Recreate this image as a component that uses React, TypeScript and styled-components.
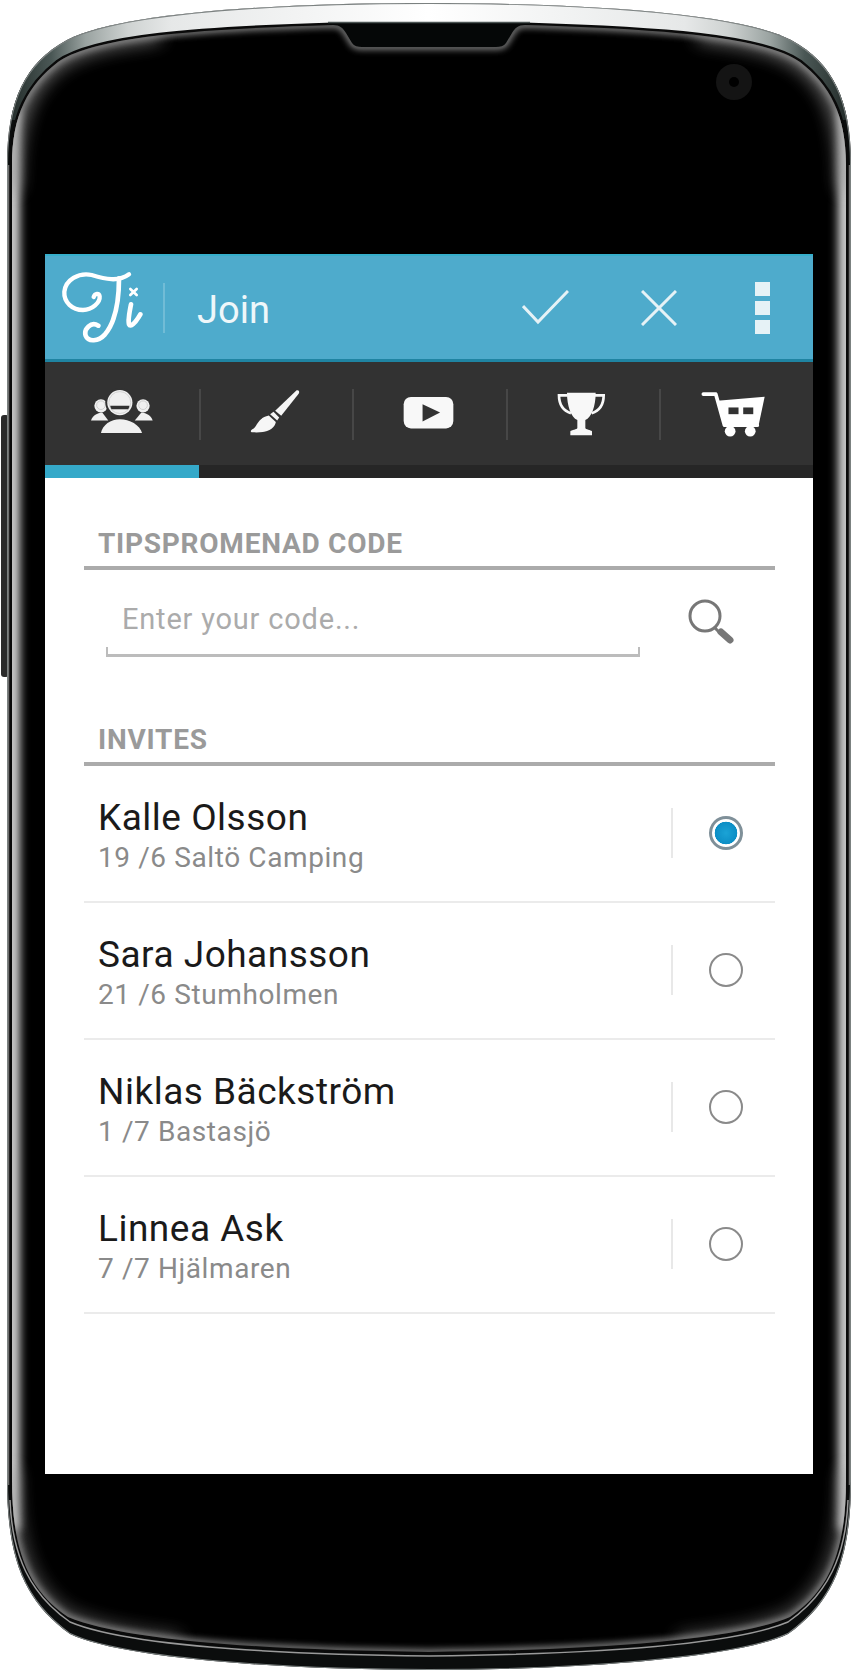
import React from "react";
import styled, { createGlobalStyle } from "styled-components";

const GlobalStyle = createGlobalStyle`
  html, body { margin: 0; padding: 0; background: #fff; }
  * { box-sizing: border-box; }
`;

const Phone = styled.div`
  position: relative;
  width: 856px;
  height: 1672px;
  padding: 254px 43px 198px 45px;
  overflow: hidden;
  font-family: Roboto, "Liberation Sans", sans-serif;
`;
const Shell = styled.svg`
  position: absolute;
  left: 0;
  top: 0;
`;
const Screen = styled.main`
  position: relative;
  height: 1220px;
  background: #fff;
  display: flex;
  flex-direction: column;
`;
const AppBar = styled.header`
  height: 108px;
  flex: none;
  display: flex;
  align-items: center;
  background: #4eabcc;
  border-top: 2px solid #35aecb;
  border-bottom: 3px solid #1f84a2;
  color: #eef7fa;
`;
const Logo = styled.svg`
  margin: 4px 0 0 10px;
  flex: none;
`;
const BarDivider = styled.span`
  width: 2px;
  height: 50px;
  margin-left: 8px;
  background: #71bcd6;
`;
const Title = styled.h1`
  flex: 1;
  margin: 4px 0 0 32px;
  font-size: 38px;
  font-weight: 400;
  line-height: 44px;
  color: #eef7fa;
`;
const BarIcon = styled.svg<{ $mr: number }>`
  flex: none;
  margin-right: ${(p) => p.$mr}px;
`;
const Overflow = styled.div`
  display: flex;
  flex-direction: column;
  gap: 5px;
  margin: 0 43px 0 0;
`;
const Dot = styled.span`
  width: 15px;
  height: 14px;
  background: #e6f2f6;
`;
const Tabs = styled.nav`
  height: 103px;
  flex: none;
  display: flex;
  background: #323232;
`;
const Tab = styled.div<{ $lift?: number; $left?: number }>`
  position: relative;
  width: 20%;
  flex: none;
  display: flex;
  align-items: center;
  justify-content: center;
  padding-bottom: ${(p) => p.$lift ?? 0}px;
  padding-right: ${(p) => p.$left ?? 0}px;
  &:not(:last-child)::after {
    content: "";
    position: absolute;
    right: -2px;
    top: 27px;
    width: 2px;
    height: 51px;
    background: #474747;
  }
`;
const Track = styled.div`
  height: 13px;
  flex: none;
  background: #262626;
`;
const Indicator = styled.div`
  width: 20%;
  height: 100%;
  background: #35a9c9;
`;
const Content = styled.div`
  flex: 1;
  padding: 49px 38px 0 39px;
`;
const SectionTitle = styled.h2`
  margin: 0;
  padding: 0 0 5px 14px;
  border-bottom: 4px solid #ababab;
  font-size: 28px;
  font-weight: 700;
  letter-spacing: 0.75px;
  line-height: 34px;
  color: #9a9a9a;
`;
const CodeRow = styled.div`
  display: flex;
  align-items: flex-start;
  height: 153px;
`;
const Field = styled.div`
  position: relative;
  width: 534px;
  height: 87px;
  margin-left: 22px;
  padding: 32px 0 0 16px;
  border-bottom: 3px solid #bcbcbc;
  font-size: 29px;
  letter-spacing: 0.8px;
  line-height: 34px;
  color: #ababab;
  &::before,
  &::after {
    content: "";
    position: absolute;
    bottom: 0;
    width: 2px;
    height: 7px;
    background: #bcbcbc;
  }
  &::before { left: 0; }
  &::after { right: 0; }
`;
const SearchIcon = styled.svg`
  margin: 27px 0 0 45px;
  flex: none;
`;
const List = styled.ul`
  margin: 0;
  padding: 0;
  list-style: none;
`;
const Row = styled.li`
  height: 137px;
  display: flex;
  align-items: center;
  padding: 0 32px 1px 14px;
  border-bottom: 2px solid #ebebeb;
`;
const RowText = styled.div`
  flex: 1;
  align-self: flex-start;
  padding-top: 30px;
`;
const Name = styled.div`
  font-size: 37px;
  letter-spacing: 0.5px;
  line-height: 44px;
  font-weight: 400;
  color: #1a1a1a;
`;
const Sub = styled.div`
  margin-top: 1px;
  font-size: 28px;
  letter-spacing: 0.6px;
  line-height: 34px;
  color: #8a8a8a;
`;
const RowDivider = styled.span`
  width: 2px;
  height: 50px;
  background: #e8e8e8;
  margin-right: 36px;
`;
const Radio = styled.span<{ $on?: boolean }>`
  width: 34px;
  height: 34px;
  flex: none;
  border-radius: 50%;
  border: ${(p) => (p.$on ? "3px solid #7f9099" : "2px solid #8a8a8a")};
  background: ${(p) =>
    p.$on
      ? "radial-gradient(circle at 50% 50%, #1ba3d6 0, #0d8fc6 10.5px, #0d8fc6 11px, #fff 11.6px)"
      : "#fff"};
`;

const outer =
  "M429 3 C300 3 125 10 67 40 C25 63 7 100 7 165 L7 1480 C7 1560 25 1602 70 1634 C120 1658 280 1670 429 1670 C578 1670 738 1658 788 1634 C833 1602 851 1560 851 1480 L851 165 C851 100 833 63 791 40 C733 10 558 3 429 3 Z";
const glass =
  "M12 165 C12 115 28 85 58 62 C95 36 200 29 333 25 C340 25 343 28 346 33 L352 43 C354 46 358 47 362 47 L496 47 C500 47 504 46 506 43 L512 33 C515 28 518 25 525 25 C658 29 763 36 800 62 C830 85 846 115 846 165 L846 1480 C846 1550 830 1590 790 1617 C735 1640 600 1650 429 1652 C258 1650 123 1640 68 1617 C28 1590 12 1550 12 1480 Z";
const notch =
  "M326 23 H532 L512 33 L506 43 C504 46 500 47 496 47 L362 47 C358 47 354 46 352 43 L346 33 Z";

const PhoneShell = () => (
  <Shell width="856" height="1672" viewBox="0 0 856 1672">
    <defs>
      <linearGradient id="metal" x1="0" x2="1" y1="0" y2="0">
        <stop offset="0" stopColor="#1c2422" />
        <stop offset="0.06" stopColor="#4a5755" />
        <stop offset="0.1" stopColor="#9aa3a1" />
        <stop offset="0.15" stopColor="#cfd3d2" />
        <stop offset="0.2" stopColor="#e6e8e8" />
        <stop offset="0.5" stopColor="#ffffff" />
        <stop offset="0.8" stopColor="#e6e8e8" />
        <stop offset="0.85" stopColor="#cfd3d2" />
        <stop offset="0.9" stopColor="#9aa3a1" />
        <stop offset="0.94" stopColor="#4a5755" />
        <stop offset="1" stopColor="#1c2422" />
      </linearGradient>
      <clipPath id="outerClip"><path d={outer} /></clipPath>
      <clipPath id="glassClip"><path d={glass} /></clipPath>
      <filter id="blurS" x="-5%" y="-5%" width="110%" height="110%"><feGaussianBlur stdDeviation="3" /></filter>
      <filter id="blurM" filterUnits="userSpaceOnUse" x="0" y="0" width="856" height="1672"><feGaussianBlur stdDeviation="5" /></filter>
      <filter id="blurL" filterUnits="userSpaceOnUse" x="0" y="0" width="856" height="1672"><feGaussianBlur stdDeviation="9" /></filter>
    </defs>
    <rect x="1" y="415" width="8" height="262" rx="3" fill="#2a2a2a" />
    <path d={outer} fill="#0b0d0d" />
    <g clipPath="url(#outerClip)">
      <rect x="0" y="0" width="856" height="120" fill="url(#metal)" />
      <path d={outer} fill="none" stroke="#7b8180" strokeWidth="2" />
      <rect x="8" y="165" width="1.5" height="1320" fill="#6e6e6e" />
      <rect x="848.5" y="165" width="1.5" height="1320" fill="#6e6e6e" />
    </g>
    <path d={glass} fill="#000" stroke="#0a0a0a" strokeWidth="5" />
    <path d={notch} fill="#050707" />
    <path d="M328 22.5 H530" stroke="#4c5554" strokeWidth="1.5" fill="none" />
    <g clipPath="url(#glassClip)">
      <path d={glass} fill="none" stroke="#8f8f8f" strokeWidth="5" filter="url(#blurS)" />
      <path d="M12 110 V1530" fill="none" stroke="#c8c8c8" strokeWidth="16" filter="url(#blurM)" />
      <path d="M846 110 V1530" fill="none" stroke="#c8c8c8" strokeWidth="16" filter="url(#blurM)" />
      <g opacity="0.85">
        <path d="M12 190 C12 115 28 85 58 62 C80 47 110 40 160 34" fill="none" stroke="#999" strokeWidth="12" filter="url(#blurL)" />
        <path d="M846 190 C846 115 830 85 800 62 C778 47 748 40 698 34" fill="none" stroke="#999" strokeWidth="12" filter="url(#blurL)" />
        <path d="M12 1470 C12 1550 28 1590 68 1617 C100 1630 130 1636 180 1641" fill="none" stroke="#999" strokeWidth="8" filter="url(#blurL)" />
        <path d="M846 1470 C846 1550 830 1590 790 1617 C758 1630 728 1636 678 1641" fill="none" stroke="#999" strokeWidth="8" filter="url(#blurL)" />
      </g>
    </g>
    <path d="M10 1500 C12 1556 30 1594 70 1622 C125 1645 260 1654 429 1656 C598 1654 733 1645 788 1622 C828 1594 846 1556 848 1500" fill="none" stroke="#9a9a9a" strokeWidth="1.5" />
    <circle cx="734" cy="82" r="18" fill="#141414" />
    <circle cx="734" cy="82" r="5" fill="#000" />
  </Shell>
);

const GroupIcon = () => (
  <svg width="63" height="47" viewBox="15 15 190 140" fill="#f0f0f0">
    <circle cx="48" cy="68" r="20" />
    <circle cx="48" cy="66" r="13" fill="none" stroke="#cfcfcf" strokeWidth="3" />
    <circle cx="175" cy="68" r="20" />
    <circle cx="175" cy="66" r="13" fill="none" stroke="#cfcfcf" strokeWidth="3" />
    <path d="M18 112 C24 96 36 90 52 88 L70 112 Z" />
    <path d="M204 112 C198 96 186 90 170 88 L150 112 Z" />
    <circle cx="105" cy="58" r="44" fill="#323232" />
    <circle cx="105" cy="58" r="38" />
    <circle cx="105" cy="58" r="33" fill="none" stroke="#d4d4d4" strokeWidth="3" />
    <path d="M76 68 H134 C133 73 132 76 130 78 H80 C78 76 77 73 76 68 Z" fill="#323232" />
    <path d="M48 150 C52 125 78 108 105 108 C134 108 166 125 172 150 Z" stroke="#323232" strokeWidth="3" paintOrder="stroke" />
  </svg>
);
const BrushIcon = () => (
  <svg width="52" height="47" viewBox="490 15 155 140" fill="#f6f6f6">
    <path d="M632 22 C638 20 642 26 638 32 L586 98 L568 83 Z" />
    <path d="M563 86 L580 103 L574 112 L553 93 Z" />
    <path d="M549 97 L570 116 C566 136 546 150 500 147 C494 146 494 142 500 138 C516 130 514 104 549 97 Z" />
  </svg>
);
const PlayIcon = () => (
  <svg width="53" height="37" viewBox="20 30 160 110">
    <rect x="25" y="38" width="150" height="95" rx="22" fill="#f8f8f8" />
    <path d="M82 60 L135 85 L82 112 Z" fill="#323232" />
  </svg>
);
const TrophyIcon = () => (
  <svg width="50" height="45" viewBox="485 25 150 135" fill="#f8f8f8">
    <path d="M518 30 H604 C604 70 592 104 573 112 V136 C573 140 590 142 593 146 V158 H528 V146 C531 142 549 140 549 136 V112 C530 104 518 70 518 30 Z" />
    <path d="M520 38 H494 C494 64 506 84 530 92 M602 38 H628 C628 64 616 84 592 92" fill="none" stroke="#f8f8f8" strokeWidth="8" />
  </svg>
);
const CartIcon = () => (
  <svg width="67" height="47" viewBox="915 20 200 140">
    <path d="M925 32 H962 L988 125 H1086" fill="none" stroke="#fff" strokeWidth="11" strokeLinecap="round" strokeLinejoin="round" />
    <path d="M967 52 L1108 40 L1090 125 H988 Z" fill="#fff" />
    <rect x="1000" y="72" width="30" height="20" fill="#323232" />
    <rect x="1044" y="72" width="30" height="20" fill="#323232" />
    <circle cx="1005" cy="143" r="16" fill="#fff" />
    <circle cx="1065" cy="143" r="16" fill="#fff" />
  </svg>
);

const invites = [
  { name: "Kalle Olsson", sub: "19 /6 Saltö Camping", on: true },
  { name: "Sara Johansson", sub: "21 /6 Stumholmen" },
  { name: "Niklas Bäckström", sub: "1 /7 Bastasjö" },
  { name: "Linnea Ask", sub: "7 /7 Hjälmaren" },
];

export default function App() {
  return (
    <Phone>
      <GlobalStyle />
      <PhoneShell />
      <Screen>
        <AppBar>
          <Logo width="100" height="90" viewBox="0 0 300 270" fill="none" stroke="#fff" strokeWidth="13" strokeLinecap="round">
            <path d="M222 28 C190 52 150 42 110 30 C70 22 32 45 28 80 C26 112 52 135 84 135 C112 135 136 112 134 94 C132 84 120 84 116 96" />
            <path d="M192 40 C192 100 182 170 150 208 C130 230 100 232 92 212 C86 192 108 168 130 182" strokeWidth="14" />
            <path d="M228 118 C224 140 218 164 222 178 C226 188 240 176 256 148" strokeWidth="14" />
            <path d="M226 72 L245 90 M245 72 L226 90" strokeWidth="8" />
          </Logo>
          <BarDivider />
          <Title>Join</Title>
          <BarIcon $mr={72} width="47" height="35" viewBox="0 0 47 35" fill="none" stroke="#e6f2f6" strokeWidth="3">
            <path d="M1 16 L16 32 L46 1" />
          </BarIcon>
          <BarIcon $mr={78} width="36" height="36" viewBox="0 0 36 36" fill="none" stroke="#e6f2f6" strokeWidth="3">
            <path d="M1 1 L35 35 M35 1 L1 35" />
          </BarIcon>
          <Overflow><Dot /><Dot /><Dot /></Overflow>
        </AppBar>
        <Tabs>
          <Tab $lift={4}><GroupIcon /></Tab>
          <Tab $lift={5}><BrushIcon /></Tab>
          <Tab $lift={3}><PlayIcon /></Tab>
          <Tab $left={4}><TrophyIcon /></Tab>
          <Tab $left={6}><CartIcon /></Tab>
        </Tabs>
        <Track><Indicator /></Track>
        <Content>
          <SectionTitle>TIPSPROMENAD CODE</SectionTitle>
          <CodeRow>
            <Field>Enter your code...</Field>
            <SearchIcon width="52" height="50" viewBox="0 0 52 50" fill="none">
              <circle cx="20" cy="19" r="15" stroke="#777" strokeWidth="3" />
              <path d="M30 31 L36 37" stroke="#777" strokeWidth="3" />
              <path d="M36 35 L45 43" stroke="#777" strokeWidth="7" strokeLinecap="round" />
            </SearchIcon>
          </CodeRow>
          <SectionTitle>INVITES</SectionTitle>
          <List>
            {invites.map((i) => (
              <Row key={i.name}>
                <RowText>
                  <Name>{i.name}</Name>
                  <Sub>{i.sub}</Sub>
                </RowText>
                <RowDivider />
                <Radio $on={i.on} />
              </Row>
            ))}
          </List>
        </Content>
      </Screen>
    </Phone>
  );
}
